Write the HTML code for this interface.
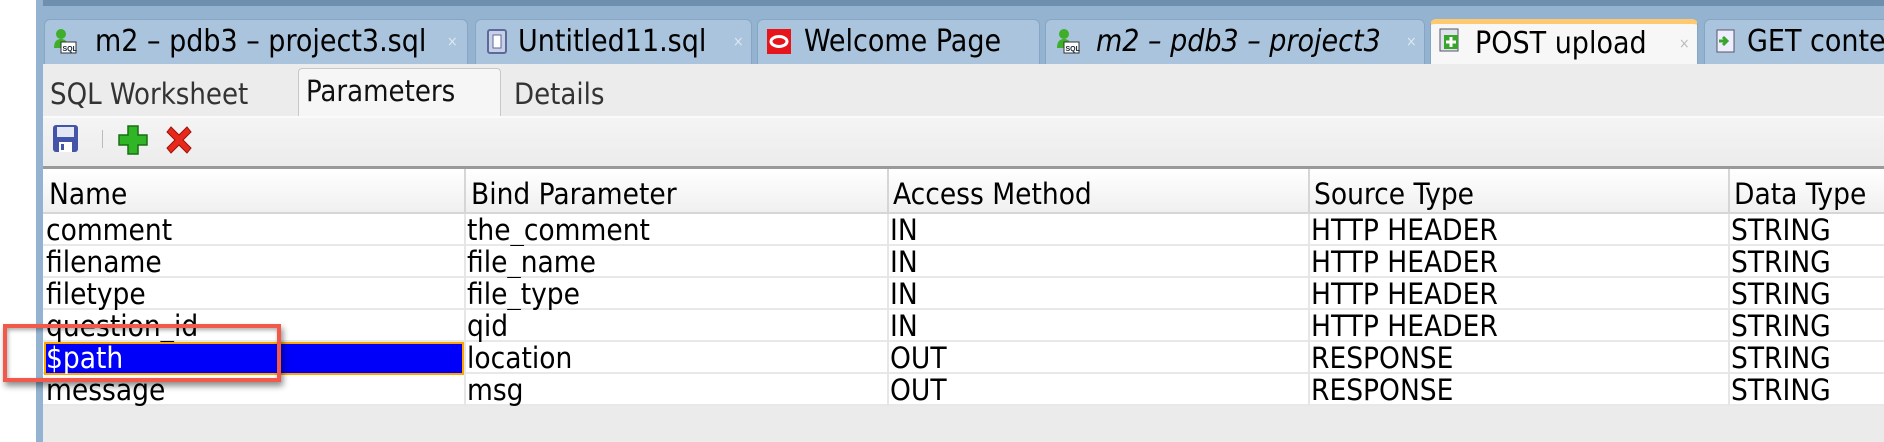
<!DOCTYPE html>
<html><head><meta charset="utf-8"><style>
*{margin:0;padding:0;box-sizing:border-box}
body{width:1884px;height:442px;overflow:hidden;background:#fff;position:relative;font-family:"DejaVu Sans Condensed","DejaVu Sans","Liberation Sans",sans-serif;color:#000}
.abs{position:absolute}
.tabbar{left:36px;top:0;width:1848px;height:64px;background:#94b3d0;border-top:6px solid #6e8fae}
.strip{left:36px;top:0;width:7px;height:442px;background:#94b3d0}
.tab{position:absolute;top:19px;height:45px;background:#a9c4dc;border:1px solid #86a6c4;border-bottom:none;border-radius:6px 6px 0 0;font-size:30px;line-height:44px;white-space:nowrap;overflow:hidden}
.tab .t{position:absolute;top:0}
.tab .x{position:absolute;top:0;font-size:14px;color:#dde8f2}
.ic{position:absolute;top:8px;width:26px;height:27px}
.sub{left:43px;top:64px;width:1841px;height:54px;background:#ececec}
.toolbar{left:43px;top:116px;width:1841px;height:50px;background:linear-gradient(#f4f4f4,#ececec);border-top:2px solid #fafafa}
.grid{left:43px;top:166px;width:1841px;height:276px;background:#ebebeb;border-top:3px solid #9a9a9a}
.hdr{position:absolute;left:0;top:0;width:1841px;height:45px;background:linear-gradient(#fff,#f0f0f0);border-bottom:2px solid #d6d6d6}
.cell{position:absolute;font-size:29.5px;line-height:32px;white-space:nowrap;overflow:hidden}
.row{position:absolute;left:0;width:1841px;height:32px;background:#fff;border-bottom:2px solid #e8e8e8}
.vl{position:absolute;top:0;width:2px;height:235px;background:#e6e6e6}
</style></head><body>
<div class="abs tabbar"></div>
<div class="abs strip"></div>

<div class="tab" style="left:44px;width:424px">
 <svg class="ic" style="left:6px" viewBox="0 0 26 27"><circle cx="10" cy="6" r="5" fill="#3fae2a"/><path d="M3 20 Q3 11 10 11 Q17 11 17 20Z" fill="#3fae2a"/><rect x="10" y="14" width="15" height="11" fill="#fff" stroke="#333"/><text x="11.5" y="23" font-size="7" font-family="Liberation Sans" font-weight="bold" fill="#123">SQL</text></svg>
 <span class="t" style="left:50px">m2 – pdb3 – project3.sql</span><span class="x" style="left:402px">×</span></div>
<div class="tab" style="left:475px;width:277px">
 <svg class="ic" style="left:8px" viewBox="0 0 26 27"><rect x="4" y="2" width="18" height="23" rx="2" fill="#c9d0e6" stroke="#5a6a9a" stroke-width="2"/><rect x="9" y="7" width="8" height="13" fill="#fff" stroke="#5a6a9a"/></svg>
 <span class="t" style="left:42px">Untitled11.sql</span><span class="x" style="left:257px">×</span></div>
<div class="tab" style="left:757px;width:283px">
 <svg class="ic" style="left:8px" viewBox="0 0 26 27"><rect x="1" y="1" width="24" height="25" fill="#e8141b"/><ellipse cx="13" cy="13.5" rx="8" ry="5" fill="none" stroke="#fff" stroke-width="3"/></svg>
 <span class="t" style="left:46px">Welcome Page</span></div>
<div class="tab" style="left:1045px;width:380px">
 <svg class="ic" style="left:8px" viewBox="0 0 26 27"><circle cx="10" cy="6" r="5" fill="#3fae2a"/><path d="M3 20 Q3 11 10 11 Q17 11 17 20Z" fill="#3fae2a"/><rect x="10" y="14" width="15" height="11" fill="#fff" stroke="#333"/><text x="11.5" y="23" font-size="7" font-family="Liberation Sans" font-weight="bold" fill="#123">SQL</text></svg>
 <span class="t" style="left:50px;font-style:italic">m2 – pdb3 – project3</span><span class="x" style="left:360px">×</span></div>
<div class="tab" style="left:1430px;width:268px;background:#f7f7f7;border-top:5px solid #ffc970;top:19px;height:45px;line-height:40px">
 <svg class="ic" style="left:6px;top:3px" viewBox="0 0 26 27"><rect x="3" y="2" width="18" height="22" fill="#dfe3ec" stroke="#556"/><rect x="7" y="8" width="14" height="14" fill="#3aa52e"/><path d="M14 10v10M9 15h10" stroke="#fff" stroke-width="3"/></svg>
 <span class="t" style="left:44px">POST upload</span><span class="x" style="left:248px;color:#bbb">×</span></div>
<div class="tab" style="left:1704px;width:200px">
 <svg class="ic" style="left:8px" viewBox="0 0 26 27"><rect x="4" y="2" width="17" height="22" fill="#eef" stroke="#556"/><path d="M6 13h7M10 9l4 4-4 4" stroke="#3aa52e" stroke-width="3" fill="none"/></svg>
 <span class="t" style="left:42px">GET conte</span></div>

<div class="abs sub"></div>
<div class="abs" style="left:298px;top:68px;width:203px;height:50px;background:#f6f6f6;border:1px solid #c8c8c8;border-bottom:none;border-radius:4px 4px 0 0"></div>
<div class="abs" style="left:50px;top:77px;font-size:29px;color:#333">SQL Worksheet</div>
<div class="abs" style="left:306px;top:74px;font-size:29px;color:#111">Parameters</div>
<div class="abs" style="left:514px;top:77px;font-size:29px;color:#333">Details</div>

<div class="abs toolbar"></div>
<svg class="abs" style="left:52px;top:124px" width="28" height="30" viewBox="0 0 28 30"><rect x="1" y="1" width="25" height="27" rx="3" fill="#4454a8"/><rect x="5" y="3" width="17" height="10" fill="#e4e8f4"/><rect x="7" y="18" width="13" height="10" fill="#fff"/><rect x="9" y="20" width="3" height="6" fill="#4454a8"/></svg>
<div class="abs" style="left:102px;top:130px;width:1px;height:18px;background:#bbb"></div>
<svg class="abs" style="left:117px;top:124px" width="32" height="32" viewBox="0 0 32 32"><path d="M11 2h10v9h9v10h-9v9H11v-9H2V11h9z" fill="#2fb526" stroke="#1a6e14" stroke-width="1.5"/></svg>
<svg class="abs" style="left:163px;top:124px" width="32" height="32" viewBox="0 0 32 32"><path d="M4 8l4-5 8 8 8-8 4 5-8 8 8 8-4 5-8-8-8 8-4-5 8-8z" fill="#e8281a" stroke="#9a1208" stroke-width="1"/></svg>

<div class="abs grid">
 <div class="hdr"></div>
 <div class="vl" style="left:421px;background:#d6d6d6"></div>
 <div class="vl" style="left:844px;background:#d6d6d6"></div>
 <div class="vl" style="left:1265px;background:#d6d6d6"></div>
 <div class="vl" style="left:1685px;background:#d6d6d6"></div>
 <div class="cell" style="left:6px;top:9px">Name</div>
 <div class="cell" style="left:428px;top:9px">Bind Parameter</div>
 <div class="cell" style="left:850px;top:9px">Access Method</div>
 <div class="cell" style="left:1271px;top:9px">Source Type</div>
 <div class="cell" style="left:1691px;top:9px">Data Type</div>

 <div class="row" style="top:45px"></div>
 <div class="row" style="top:77px"></div>
 <div class="row" style="top:109px"></div>
 <div class="row" style="top:141px"></div>
 <div class="row" style="top:173px"></div>
 <div class="row" style="top:205px"></div>
 <div class="vl" style="left:421px;top:45px;height:192px"></div>
 <div class="vl" style="left:844px;top:45px;height:192px"></div>
 <div class="vl" style="left:1265px;top:45px;height:192px"></div>
 <div class="vl" style="left:1685px;top:45px;height:192px"></div>
 <div style="position:absolute;left:1px;top:173px;width:420px;height:33px;background:#0000fa;border:2px solid #ffa500"></div>

 <div class="cell" style="left:3px;top:45px">comment</div><div class="cell" style="left:424px;top:45px">the_comment</div><div class="cell" style="left:847px;top:45px">IN</div><div class="cell" style="left:1268px;top:45px">HTTP HEADER</div><div class="cell" style="left:1688px;top:45px">STRING</div>
 <div class="cell" style="left:3px;top:77px">filename</div><div class="cell" style="left:424px;top:77px">file_name</div><div class="cell" style="left:847px;top:77px">IN</div><div class="cell" style="left:1268px;top:77px">HTTP HEADER</div><div class="cell" style="left:1688px;top:77px">STRING</div>
 <div class="cell" style="left:3px;top:109px">filetype</div><div class="cell" style="left:424px;top:109px">file_type</div><div class="cell" style="left:847px;top:109px">IN</div><div class="cell" style="left:1268px;top:109px">HTTP HEADER</div><div class="cell" style="left:1688px;top:109px">STRING</div>
 <div class="cell" style="left:3px;top:141px">question_id</div><div class="cell" style="left:424px;top:141px">qid</div><div class="cell" style="left:847px;top:141px">IN</div><div class="cell" style="left:1268px;top:141px">HTTP HEADER</div><div class="cell" style="left:1688px;top:141px">STRING</div>
 <div class="cell" style="left:3px;top:173px;color:#fff">$path</div><div class="cell" style="left:424px;top:173px">location</div><div class="cell" style="left:847px;top:173px">OUT</div><div class="cell" style="left:1268px;top:173px">RESPONSE</div><div class="cell" style="left:1688px;top:173px">STRING</div>
 <div class="cell" style="left:3px;top:205px">message</div><div class="cell" style="left:424px;top:205px">msg</div><div class="cell" style="left:847px;top:205px">OUT</div><div class="cell" style="left:1268px;top:205px">RESPONSE</div><div class="cell" style="left:1688px;top:205px">STRING</div>
</div>

<div class="abs" style="left:3px;top:324px;width:278px;height:58px;border:4px solid #f2594b;box-shadow:2px 4px 6px rgba(0,0,0,.45),inset 1px 2px 4px rgba(0,0,0,.35)"></div>
</body></html>
